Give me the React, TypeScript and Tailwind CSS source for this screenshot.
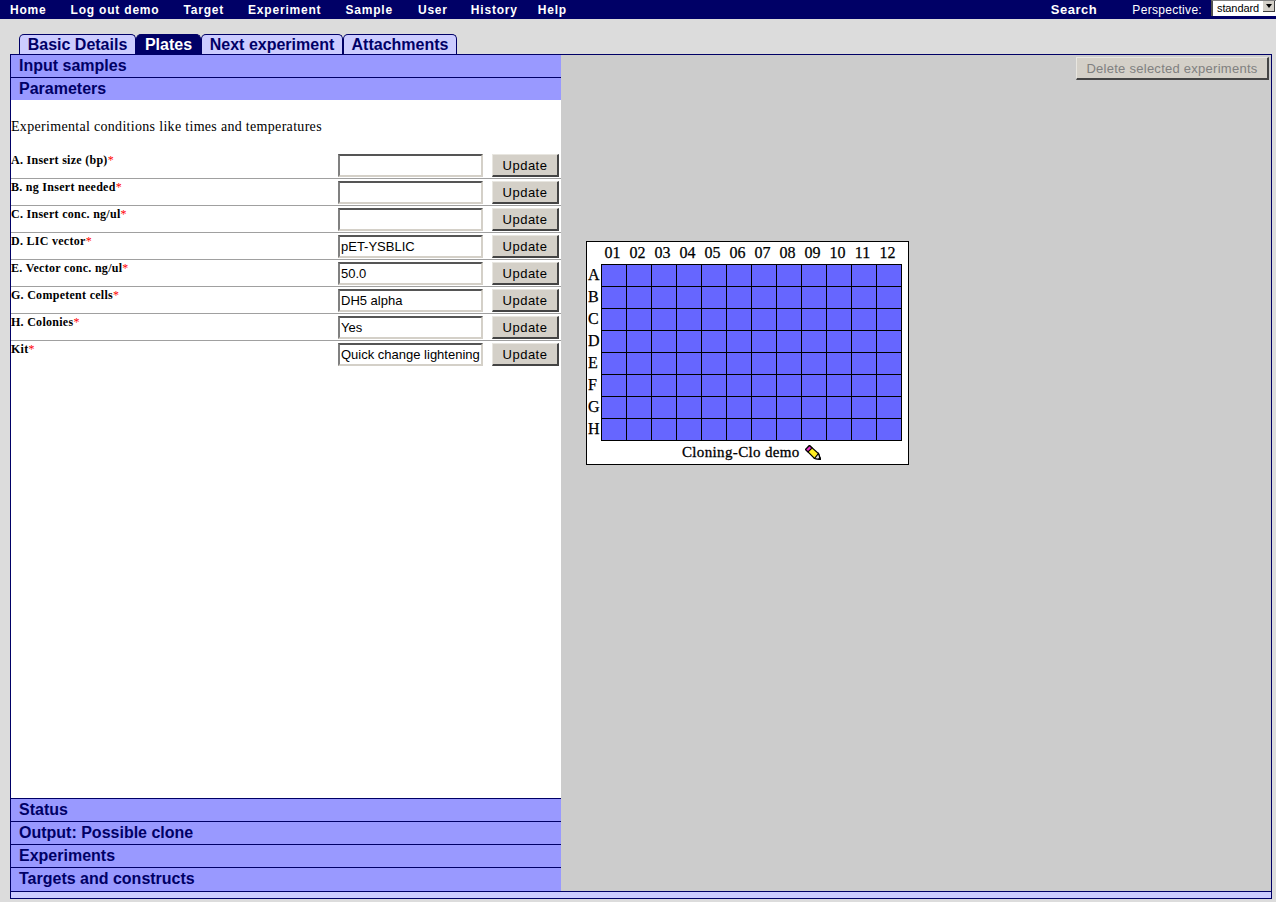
const NAV = [
  { label: 'Home', className: 'ml-[10px]' },
  { label: 'Log out demo', className: 'ml-[24px]' },
  { label: 'Target', className: 'ml-[24px]' },
  { label: 'Experiment', className: 'ml-[24px]' },
  { label: 'Sample', className: 'ml-[24px]' },
  { label: 'User', className: 'ml-[25px]' },
  { label: 'History', className: 'ml-[23px]' },
  { label: 'Help', className: 'ml-[20px]' },
];

const TABS = [
  { label: 'Basic Details', active: false, className: 'w-[117px]' },
  { label: 'Plates', active: true, className: 'w-[65px]' },
  { label: 'Next experiment', active: false, className: 'w-[142px]' },
  { label: 'Attachments', active: false, className: 'w-[114px]' },
];

const PARAMETERS = [
  { label: 'A. Insert size (bp)', value: '' },
  { label: 'B. ng Insert needed', value: '' },
  { label: 'C. Insert conc. ng/ul', value: '' },
  { label: 'D. LIC vector', value: 'pET-YSBLIC' },
  { label: 'E. Vector conc. ng/ul', value: '50.0' },
  { label: 'G. Competent cells', value: 'DH5 alpha' },
  { label: 'H. Colonies', value: 'Yes' },
  { label: 'Kit', value: 'Quick change lightening' },
];

const COLUMNS = ['01', '02', '03', '04', '05', '06', '07', '08', '09', '10', '11', '12'];
const ROWS = ['A', 'B', 'C', 'D', 'E', 'F', 'G', 'H'];

const SANS = "font-['Liberation_Sans',Arial,sans-serif]";
const SERIF = "font-['Liberation_Serif','Times_New_Roman',serif]";

function SectionHeader({ label, top, tall }: { label: string; top?: boolean; tall?: boolean }) {
  return (
    <div
      className={`${tall ? 'h-[24px]' : 'h-[23px]'} bg-[#9999ff] pl-[8px] text-[16px] leading-[21px] font-bold text-[#000066] ${
        top ? 'border-t border-[#000066]' : 'border-b border-[#000066]'
      }`}
    >
      {label}
    </div>
  );
}

function ParameterRow({ label, value, last }: { label: string; value: string; last: boolean }) {
  return (
    <div className={`flex h-[27px] ${last ? '' : 'border-b border-[#a0a0a0]'}`}>
      <div className={`${SERIF} flex-1 pt-[2px] text-[12px] leading-[13px] font-bold tracking-[0.28px] text-black`}>
        {label}
        <span className="font-normal text-[#ff0000]">*</span>
      </div>
      <input
        readOnly
        value={value}
        className="mt-[2px] h-[23px] w-[145px] border-2 border-t-[#555555] border-r-[#d4d0c8] border-b-[#d4d0c8] border-l-[#808080] bg-white px-[1px] text-[13px] text-black outline-none"
      />
      <button className="mt-[2px] mr-[2px] ml-[9px] h-[23px] w-[67px] border-t border-r-2 border-b-2 border-l border-t-[#e8e6e0] border-r-[#444444] border-b-[#444444] border-l-[#e8e6e0] bg-[#d4d0c8] text-[13px] leading-[19px] tracking-[0.5px] text-black">
        Update
      </button>
    </div>
  );
}

// pencil glyph next to the plate name
function Pencil() {
  return (
    <svg width="16" height="15" viewBox="0 0 16 15" className="ml-[5px] inline-block">
      <path d="M4.5 0.5 L0.5 4.5 L9.5 13.5 L15.5 14.5 L13.5 8.5 Z" fill="#ffee22" stroke="#000" strokeWidth="1.2" />
      <path d="M4.5 0.5 L0.5 4.5 L3 7 L7 3 Z" fill="#ee33cc" stroke="#000" strokeWidth="1.2" />
      <path d="M9.5 13.5 L15.5 14.5 L13.5 8.5 Z" fill="#dddddd" stroke="#000" strokeWidth="1.2" />
      <path d="M13 14 L16 15 L15 11.5 Z" fill="#000" />
    </svg>
  );
}

function Plate() {
  return (
    <div className={`${SERIF} ml-[25px] h-[224px] w-[323px] border border-black bg-white text-black`}>
      <div className="ml-[13px] flex h-[22px]">
        {COLUMNS.map((col) => (
          <div
            key={col}
            className="w-[25px] pt-[2px] text-center text-[16px] leading-[18px] [-webkit-text-stroke:0.25px_#000]"
          >
            {col}
          </div>
        ))}
      </div>
      <div className="flex">
        <div className="w-[14px]">
          {ROWS.map((row) => (
            <div key={row} className="h-[22px] pt-[2px] pl-[1px] text-[16px] leading-[18px] [-webkit-text-stroke:0.25px_#000]">
              {row}
            </div>
          ))}
        </div>
        <div className="grid grid-cols-[repeat(12,25px)] grid-rows-[repeat(8,22px)] border-t border-l border-black">
          {ROWS.flatMap((row) =>
            COLUMNS.map((col) => (
              <div key={row + col} className="border-r border-b border-black bg-[#6666ff]" />
            )),
          )}
        </div>
      </div>
      <div className="ml-[95px] flex items-center pt-[2px] text-[15px] leading-[18px] tracking-[0.35px] [-webkit-text-stroke:0.3px_#000]">
        Cloning-Clo demo
        <Pencil />
      </div>
    </div>
  );
}

export default function App() {
  return (
    <div className={`${SANS} flex h-[902px] w-[1276px] flex-col overflow-hidden bg-[#dcdcdc]`}>
      <div className="flex h-[19px] items-center bg-[#000066] text-[12px] font-bold tracking-[0.8px] text-white">
        {NAV.map((item) => (
          <span key={item.label} className={item.className}>
            {item.label}
          </span>
        ))}
        <span className="ml-auto text-[13px] tracking-[0.55px]">Search</span>
        <span className="ml-[35px] text-[12px] font-normal tracking-[0.3px]">Perspective:</span>
        <div className="mb-[3px] ml-[9px] flex h-[16px] w-[65px] items-start border-t border-l-2 border-t-[#808080] border-l-[#505050] bg-white pl-[4px] text-[11px] leading-[14px] font-normal tracking-[-0.1px] text-black">
          <span className="flex-1">standard</span>
          <span className="mr-[1px] flex h-[11px] w-[12px] items-center justify-center border-r border-b border-[#404040] bg-[#d4d0c8]">
            <span className="h-0 w-0 border-x-[3px] border-t-[4px] border-x-transparent border-t-black" />
          </span>
        </div>
      </div>

      <div className="mt-[15px] ml-[19px] flex h-[20px]">
        {TABS.map((tab) => (
          <div
            key={tab.label}
            className={`${tab.className} rounded-t-[5px] border border-b-0 border-[#000066] text-center text-[16px] leading-[19px] font-bold ${
              tab.active ? 'bg-[#000066] text-white' : 'bg-[#ccccff] text-[#000066]'
            }`}
          >
            {tab.label}
          </div>
        ))}
      </div>

      <div className="relative ml-[10px] flex h-[845px] w-[1262px] flex-col border border-[#000066] bg-[#ccccff]">
        <div className="flex h-[837px] border-b border-[#000066]">
          <div className="flex w-[550px] flex-col">
            <SectionHeader label="Input samples" />
            <div className="h-[22px] bg-[#9999ff] pl-[8px] text-[16px] leading-[21px] font-bold text-[#000066]">
              Parameters
            </div>
            <div className="flex-1 bg-white">
              <p className={`${SERIF} pt-[18px] text-[14px] leading-[18px] tracking-[0.31px] text-black`}>
                Experimental conditions like times and temperatures
              </p>
              <div className="mt-[16px]">
                {PARAMETERS.map((param, i) => (
                  <ParameterRow
                    key={param.label}
                    label={param.label}
                    value={param.value}
                    last={i === PARAMETERS.length - 1}
                  />
                ))}
              </div>
            </div>
            <SectionHeader label="Status" top />
            <SectionHeader label="Output: Possible clone" top />
            <SectionHeader label="Experiments" top />
            <SectionHeader label="Targets and constructs" top tall />
          </div>
          <div className="flex-1 bg-[#cccccc]">
            <div className="flex justify-end pt-[2px] pr-[2px]">
              <button className="h-[23px] w-[193px] border-t border-r-2 border-b-2 border-l border-t-[#e8e6e0] border-r-[#444444] border-b-[#444444] border-l-[#e8e6e0] bg-[#d4d0c8] text-[13px] leading-[19px] tracking-[0.26px] text-[#808080]">
                Delete selected experiments
              </button>
            </div>
            <div className="pt-[161px]">
              <Plate />
            </div>
          </div>
        </div>
      </div>
    </div>
  );
}
